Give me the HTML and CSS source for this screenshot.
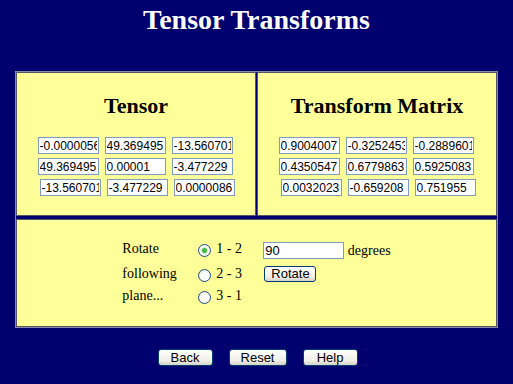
FILE: index.html
```html
<!DOCTYPE html>
<html lang="en">
<head>
    <meta charset="UTF-8">
    <title>Tensor Transforms</title>
    <link rel="stylesheet" href="styles.css">
</head>
<body>
<h1 class="title">Tensor Transforms</h1>
<div class="panel">
    <div class="cell">
        <h2>Tensor</h2>
        <div class="matrix">
            <div class="row shift">
                <input type="text" value="-0.0000056437">
                <input type="text" value="49.369495">
                <input type="text" value="-13.5607012">
            </div>
            <div class="row shift">
                <input type="text" value="49.369495">
                <input type="text" value="0.00001">
                <input type="text" value="-3.477229">
            </div>
            <div class="row">
                <input type="text" value="-13.5607012">
                <input type="text" value="-3.477229">
                <input type="text" value="0.0000086">
            </div>
        </div>
    </div>
    <div class="cell">
        <h2>Transform Matrix</h2>
        <div class="matrix">
            <div class="row shift">
                <input type="text" value="0.9004007">
                <input type="text" value="-0.3252453">
                <input type="text" value="-0.2889601">
            </div>
            <div class="row shift">
                <input type="text" value="0.4350547">
                <input type="text" value="0.6779863">
                <input type="text" value="0.5925083">
            </div>
            <div class="row">
                <input type="text" value="0.0032023">
                <input type="text" value="-0.659208">
                <input type="text" value="0.751955">
            </div>
        </div>
    </div>
    <div class="cell rotate">
        <div class="controls">
            <span class="label">Rotate</span>
            <label class="plane"><input type="radio" name="plane" checked>1 - 2</label>
            <span class="angle"><input type="text" class="degrees" value="90"> degrees</span>

            <span class="label">following</span>
            <label class="plane"><input type="radio" name="plane">2 - 3</label>
            <span><button class="btn">Rotate</button></span>

            <span class="label">plane...</span>
            <label class="plane"><input type="radio" name="plane">3 - 1</label>
            <span></span>
        </div>
    </div>
</div>
<div class="actions">
    <button class="btn wide">Back</button>
    <button class="btn wide">Reset</button>
    <button class="btn wide">Help</button>
</div>
</body>
</html>
```
FILE: styles.css
```css
body {
    margin: 0;
    background-color: #00006e;
    font-family: "Liberation Serif", "Times New Roman", serif;
}
.title {
    margin: 4px 0 0;
    color: #fff;
    font-size: 28px;
    text-align: center;
}
.panel {
    display: grid;
    grid-template-columns: 240px 240px;
    grid-template-rows: 144px 108px;
    column-gap: 1px;
    row-gap: 3px;
    width: 481px;
    margin: 35px auto 0;
    border: 1px solid #8888a0;
}
.cell {
    background-color: #ffff99;
    border: 1px solid #55556a;
    text-align: center;
}
.cell h2 {
    margin: 20px 0 0;
    font-size: 22px;
}
.matrix {
    display: flex;
    flex-direction: column;
    gap: 4px;
    margin-top: 18px;
}
.row {
    display: flex;
    justify-content: center;
    gap: 6px;
    padding-left: 2px;
}
.row.shift {
    padding-left: 0;
    padding-right: 2px;
}
input[type="text"] {
    box-sizing: border-box;
    width: 61px;
    height: 17px;
    margin: 0;
    padding: 0 1px;
    border: 1px solid #7f9db9;
    background: #fff;
    font-family: "Liberation Sans", Arial, sans-serif;
    font-size: 12px;
    color: #000;
}
.rotate {
    grid-column: span 2;
    padding-top: 21px;
}
.controls {
    display: grid;
    grid-template-columns: 76px 65px auto;
    grid-template-rows: 25px 22px 20px;
    width: max-content;
    margin: 0 auto;
    text-align: left;
    font-size: 14px;
    line-height: 16px;
}
.plane {
    display: flex;
    align-items: flex-start;
}
.plane input {
    appearance: none;
    box-sizing: border-box;
    width: 13px;
    height: 13px;
    margin: 3px 5px 0 0;
    border: 1px solid #1c5180;
    border-radius: 50%;
    background: radial-gradient(circle at 60% 60%, #fff 40%, #d8d8d0 100%);
}
.plane input:checked {
    background: radial-gradient(circle, #3fb83f 0 2px, #8ad98a 2.5px, #fff 3.5px, #e6e6e0 100%);
}
.angle input.degrees {
    width: 81px;
    margin-top: 1px;
    font-size: 13px;
}
.btn {
    box-sizing: border-box;
    height: 16px;
    padding: 0 6px;
    border: 1px solid #003c74;
    border-radius: 3px;
    background: linear-gradient(#fff, #f0efe8 70%, #d6d3c6);
    font-family: "Liberation Sans", Arial, sans-serif;
    font-size: 13px;
    line-height: 14px;
    color: #000;
}
.controls .btn {
    width: 52px;
    margin-left: 1px;
}
.actions {
    display: flex;
    justify-content: center;
    gap: 16px;
    margin-top: 21px;
    padding-left: 2px;
}
.btn.wide {
    width: 55px;
    height: 17px;
}
.btn.wide:nth-child(2) {
    width: 58px;
}
```
